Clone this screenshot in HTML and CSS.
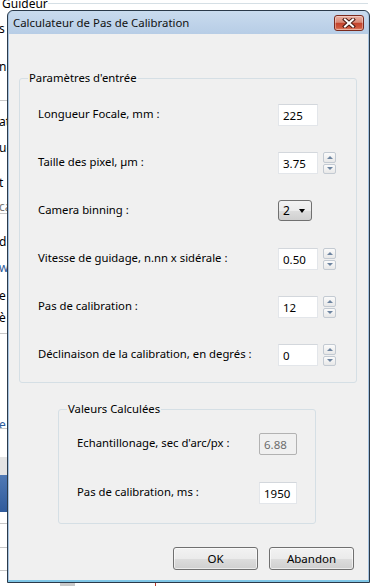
FILE: index.html
```html
<!DOCTYPE html>
<html lang="fr">
<head>
    <meta charset="UTF-8">
    <meta name="viewport" content="width=device-width, initial-scale=1.0">
    <title>Calculateur de Pas de Calibration</title>
    <link rel="stylesheet" href="styles.css">
</head>
<body>
    <!-- Fenêtre parente (partiellement cachée) -->
    <div class="desktop">
        <div class="parent-title">Guideur</div>
        <div class="parent-line"></div>
        <span class="frag" style="top:21px">s</span>
        <span class="frag" style="top:59px">n</span>
        <span class="frag" style="top:114px">at</span>
        <span class="frag" style="top:140px">ue</span>
        <span class="frag" style="top:175px">t</span>
        <span class="frag frag-gray" style="top:199px">ca</span>
        <span class="frag" style="top:234px">d</span>
        <span class="frag frag-blue" style="top:260px">w</span>
        <span class="frag" style="top:288px">e</span>
        <span class="frag" style="top:310px">è</span>
        <span class="frag frag-blue" style="top:417px">e</span>
        <div class="hline" style="top:100px"></div>
        <div class="hline" style="top:213px"></div>
        <div class="hline" style="top:333px"></div>
        <div class="hline" style="top:428px"></div>
        <div class="gray-band"></div>
        <div class="blue-band"></div>
        <div class="hline" style="top:523px"></div>
        <div class="hline" style="top:547px"></div>
        <div class="hline" style="top:570px"></div>
        <div class="bottom-bit"></div>
        <div class="bottom-red"></div>
    </div>

    <div class="dialog">
        <div class="titlebar">
            <span class="title">Calculateur de Pas de Calibration</span>
            <button class="close-btn" aria-label="Fermer">
                <svg width="14" height="10" viewBox="0 0 14 10">
                    <path d="M3 1.5 L11 8.5 M11 1.5 L3 8.5" stroke="#4a1a12" stroke-width="4" stroke-linecap="square"/>
                    <path d="M3 1.5 L11 8.5 M11 1.5 L3 8.5" stroke="#fff" stroke-width="2" stroke-linecap="square"/>
                </svg>
            </button>
        </div>

        <div class="content">
            <fieldset class="group group-params">
                <legend>Paramètres d'entrée</legend>

                <div class="row">
                    <label for="focale">Longueur Focale, mm :</label>
                    <div class="field">
                        <input type="text" id="focale" value="225">
                    </div>
                </div>

                <div class="row">
                    <label for="pixel">Taille des pixel, µm :</label>
                    <div class="field">
                        <input type="text" id="pixel" value="3.75">
                        <div class="spin"><span class="up"></span><span class="down"></span></div>
                    </div>
                </div>

                <div class="row">
                    <label>Camera binning :</label>
                    <div class="field">
                        <div class="combo"><span>2</span><span class="caret"></span></div>
                    </div>
                </div>

                <div class="row">
                    <label for="vitesse">Vitesse de guidage, n.nn x sidérale :</label>
                    <div class="field">
                        <input type="text" id="vitesse" value="0.50">
                        <div class="spin"><span class="up"></span><span class="down"></span></div>
                    </div>
                </div>

                <div class="row">
                    <label for="pas">Pas de calibration :</label>
                    <div class="field">
                        <input type="text" id="pas" value="12">
                        <div class="spin"><span class="up"></span><span class="down"></span></div>
                    </div>
                </div>

                <div class="row">
                    <label for="decl">Déclinaison de la calibration, en degrés :</label>
                    <div class="field">
                        <input type="text" id="decl" value="0">
                        <div class="spin"><span class="up"></span><span class="down"></span></div>
                    </div>
                </div>
            </fieldset>

            <fieldset class="group group-calc">
                <legend>Valeurs Calculées</legend>

                <div class="row row-calc">
                    <label for="echant">Echantillonage, sec d'arc/px :</label>
                    <input type="text" id="echant" value="6.88" disabled>
                </div>

                <div class="row row-calc">
                    <label for="pasms">Pas de calibration, ms :</label>
                    <input type="text" id="pasms" value="1950">
                </div>
            </fieldset>

            <div class="actions">
                <button class="btn">OK</button>
                <button class="btn">Abandon</button>
            </div>
        </div>
    </div>
</body>
</html>
```

FILE: styles.css
```css
/* Styles généraux */
body {
    margin: 0;
    width: 370px;
    height: 586px;
    position: relative;
    overflow: hidden;
    background: #fff;
    font-family: "Noto Sans", "Open Sans", sans-serif;
    font-size: 11.3px;
    color: #000;
}

/* Fenêtre parente derrière le dialogue */
.desktop {
    position: absolute;
    inset: 0;
}

.parent-title {
    position: absolute;
    left: 2px;
    top: -3px;
    font-size: 12px;
    line-height: 14px;
}

.parent-line {
    position: absolute;
    left: 48px;
    right: 2px;
    top: 3px;
    height: 1px;
    background: #d5dfe5;
}

.frag {
    position: absolute;
    left: -1px;
    font-size: 12px;
    line-height: 16px;
}

.frag-gray {
    color: #777;
}

.frag-blue {
    color: #2a5a9a;
}

.hline {
    position: absolute;
    left: 0;
    width: 8px;
    height: 1px;
    background: #c8c8c8;
}

.gray-band {
    position: absolute;
    left: 0;
    width: 8px;
    top: 457px;
    height: 18px;
    background: #e4e4e4;
}

.blue-band {
    position: absolute;
    left: 0;
    width: 8px;
    top: 475px;
    height: 37px;
    background: linear-gradient(#4f79b5, #2f5b9c);
}

.bottom-bit {
    position: absolute;
    left: 60px;
    width: 15px;
    top: 583px;
    height: 3px;
    background: #c9c9c9;
}

.bottom-red {
    position: absolute;
    left: 155px;
    width: 1px;
    top: 583px;
    height: 3px;
    background: #c0392b;
}

/* Fenêtre de dialogue */
.dialog {
    position: absolute;
    left: 7px;
    top: 10px;
    width: 363px;
    height: 573px;
    box-sizing: border-box;
    border: 1px solid #2b3a4a;
    border-radius: 6px 6px 0 0;
    background: #a8c4e0;
    padding: 0 1px 2px 1px;
    display: flex;
    flex-direction: column;
    box-shadow: inset 0 -2px 0 #7fc6e6;
}

.titlebar {
    height: 23px;
    flex: none;
    display: flex;
    justify-content: space-between;
    align-items: flex-start;
    background: linear-gradient(#c9dbee, #b7cde6);
    border-radius: 5px 5px 0 0;
}

.title {
    margin: 4px 0 0 4px;
    font-size: 11.4px;
    line-height: 16px;
    color: #111;
}

.close-btn {
    margin: 4px 4px 0 0;
    width: 30px;
    height: 16px;
    padding: 0;
    border: 1px solid #7a2a1e;
    border-radius: 3px;
    background: linear-gradient(#eab0a2, #d98a77 45%, #c4432c 52%, #cf5a40 85%, #e8957a);
    display: flex;
    align-items: center;
    justify-content: center;
    box-shadow: inset 0 0 0 1px rgba(255, 255, 255, 0.35);
}

.content {
    flex: 1;
    background: #f0f0f0;
    display: flex;
    flex-direction: column;
    padding-top: 36px;
}

/* Boîtes de groupe */
.group {
    margin: 0;
    border: 1px solid #d5dfe5;
    border-radius: 3px;
    min-width: 0;
}

.group legend {
    padding: 0 1px;
    margin-left: -10px;
    line-height: 16px;
}

.group-params {
    margin: 0 11px 0 10px;
    padding: 18px 20px 16px 18px;
    display: flex;
    flex-direction: column;
    gap: 26px;
}

.group-calc {
    margin: 18px 0 0 49px;
    width: 258px;
    box-sizing: border-box;
    padding: 16px 18px 19px 18px;
    display: flex;
    flex-direction: column;
    gap: 27px;
}

.row {
    display: flex;
    align-items: center;
    justify-content: space-between;
    height: 22px;
}

.row label {
    line-height: 16px;
    margin-top: -3px;
}

.field {
    width: 58px;
    display: flex;
    gap: 5px;
    align-items: stretch;
    height: 22px;
}

input[type="text"] {
    box-sizing: border-box;
    width: 40px;
    height: 22px;
    margin: 0;
    padding: 0 4px;
    border: 1px solid #e3e6ea;
    border-top-color: #d3d7dc;
    background: #fff;
    font-family: inherit;
    font-size: 11.5px;
    color: #000;
}

.row-calc input[type="text"] {
    width: 38px;
}

input[type="text"]:disabled {
    background: #f0f0f0;
    border: 1px solid #b2b2b2;
    color: #6d6d6d;
    border-radius: 2px;
}

/* Boutons flèches */
.spin {
    width: 13px;
    display: flex;
    flex-direction: column;
    gap: 1px;
}

.spin span {
    flex: 1;
    border: 1px solid #c3cad2;
    border-radius: 2px;
    background: linear-gradient(#fbfbfb, #e8e8e8);
    display: flex;
    align-items: center;
    justify-content: center;
}

.spin .up::after,
.spin .down::after {
    content: "";
    border-left: 3px solid transparent;
    border-right: 3px solid transparent;
}

.spin .up::after {
    border-bottom: 3px solid #6d84a0;
}

.spin .down::after {
    border-top: 3px solid #6d84a0;
}

/* Liste déroulante */
.combo {
    box-sizing: border-box;
    width: 34px;
    height: 21px;
    border: 1px solid #707070;
    border-radius: 3px;
    background: linear-gradient(#f2f2f2, #ebebeb 50%, #dddddd 51%, #cfcfcf);
    display: flex;
    align-items: center;
    justify-content: space-between;
    padding: 0 6px 0 4px;
    font-size: 12px;
}

.caret {
    border-left: 3.5px solid transparent;
    border-right: 3.5px solid transparent;
    border-top: 4px solid #000;
}

/* Boutons du bas */
.actions {
    display: flex;
    justify-content: flex-end;
    gap: 11px;
    margin-top: 23px;
    padding-right: 14px;
}

.btn {
    width: 85px;
    height: 23px;
    border: 1px solid #707070;
    border-radius: 3px;
    background: linear-gradient(#f2f2f2, #ebebeb 50%, #dddddd 51%, #cfcfcf);
    font-family: inherit;
    font-size: 11.5px;
    color: #000;
    padding: 0;
    box-shadow: inset 0 0 0 1px rgba(255, 255, 255, 0.6);
}
```
